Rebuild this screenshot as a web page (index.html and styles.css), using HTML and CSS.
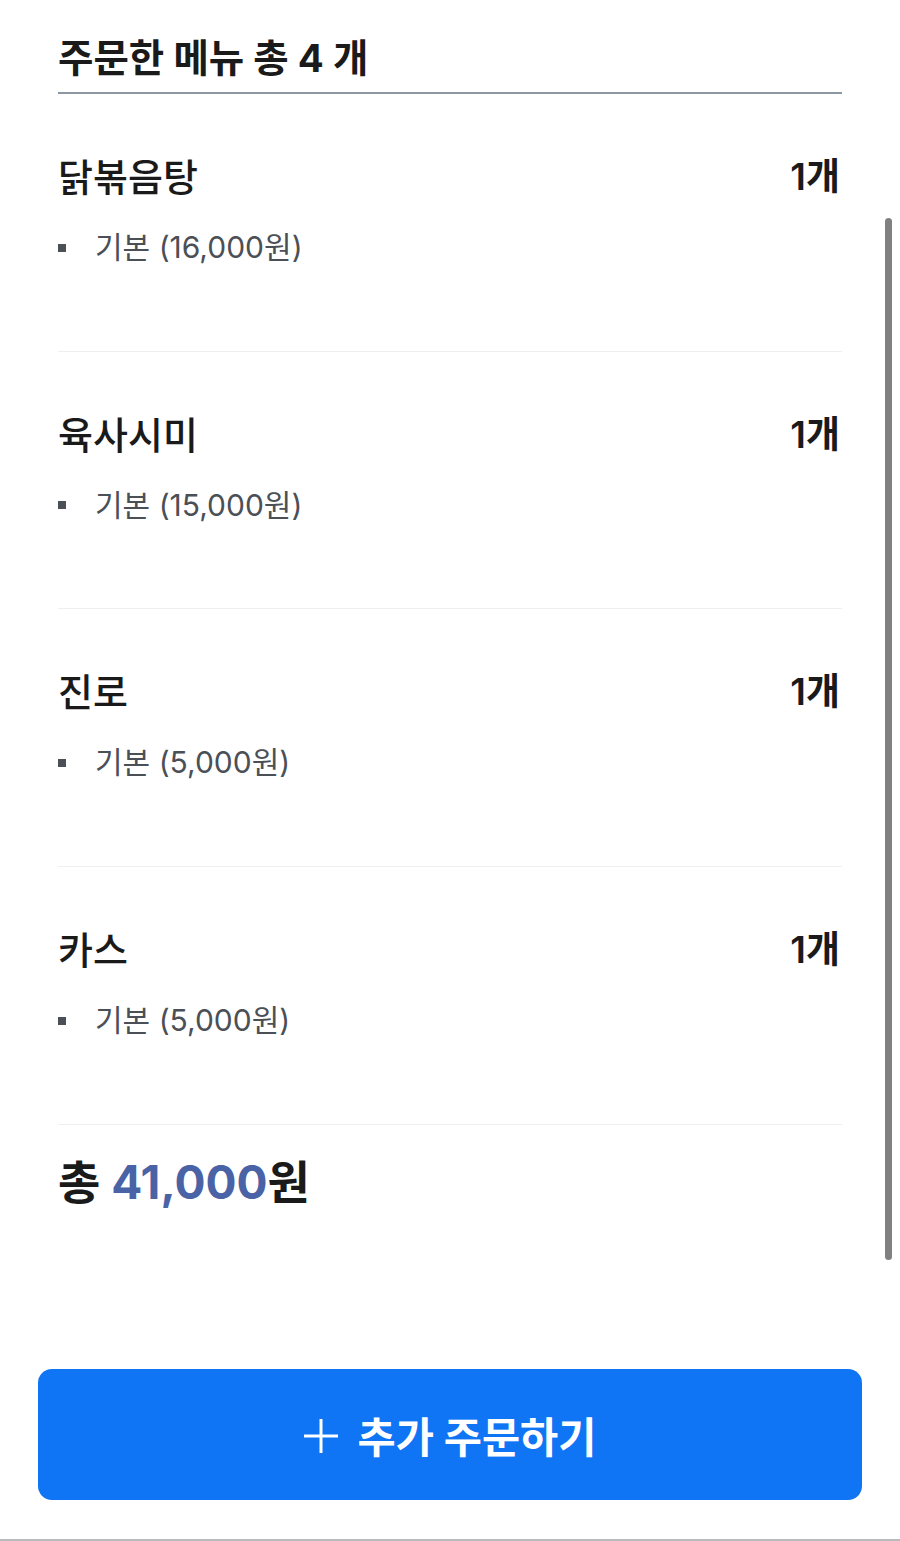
FILE: index.html
```html
<!DOCTYPE html>
<html lang="ko">
<head>
<meta charset="utf-8">
<link rel="stylesheet" href="styles.css">
</head>
<body>
<div class="page">
  <main class="content">
    <h1 class="title">주문한 메뉴 총 4 개</h1>
    <ul class="items">
      <li class="item">
        <div class="row"><span class="name">닭볶음탕</span><span class="qty">1개</span></div>
        <div class="opt"><span class="bullet"></span>기본 (16,000원)</div>
      </li>
      <li class="item">
        <div class="row"><span class="name">육사시미</span><span class="qty">1개</span></div>
        <div class="opt"><span class="bullet"></span>기본 (15,000원)</div>
      </li>
      <li class="item">
        <div class="row"><span class="name">진로</span><span class="qty">1개</span></div>
        <div class="opt"><span class="bullet"></span>기본 (5,000원)</div>
      </li>
      <li class="item">
        <div class="row"><span class="name">카스</span><span class="qty">1개</span></div>
        <div class="opt"><span class="bullet"></span>기본 (5,000원)</div>
      </li>
    </ul>
    <div class="total">총 <span class="amount">41,000</span>원</div>
  </main>
  <footer class="footer">
    <button class="add-btn"><svg class="plus" width="34" height="36" viewBox="0 0 34 36"><path d="M17 1V35M0 18H34" stroke="#fff" stroke-width="3" fill="none"/></svg>추가 주문하기</button>
  </footer>
  <div class="scrollbar"></div>
</div>
</body>
</html>
```
FILE: styles.css
```css
* { box-sizing: border-box; }
html, body { margin: 0; padding: 0; background: #fff; }
body {
  font-family: "Inter", "Noto Sans CJK KR", "Noto Sans", sans-serif;
  color: #1a1a1a;
}
.page {
  position: relative;
  height: 1541px;
  display: flex;
  flex-direction: column;
  overflow: hidden;
}
.content {
  flex: 1;
  padding: 0 58px;
}
.title {
  margin: 33px 0 0;
  font-size: 38.5px;
  font-weight: 700;
  line-height: 50px;
  padding-bottom: 9px;
  border-bottom: 2px solid #8d97a4;
}
.items { list-style: none; margin: 0; padding: 0; }
.item {
  padding: 58px 0 82.7px;
  border-bottom: 1px solid #eeeff1;
}
.row {
  display: flex;
  justify-content: space-between;
  align-items: center;
  line-height: 50px;
}
.name { font-size: 38px; font-weight: 500; }
.qty { font-size: 37px; font-weight: 600; padding-right: 2px; }
.opt {
  margin-top: 25px;
  display: flex;
  align-items: center;
  font-size: 30px;
  line-height: 41px;
  color: #4b4f56;
}
.bullet {
  width: 8px;
  height: 8px;
  background: #4b4f56;
  margin-right: 29px;
}
.total {
  margin-top: 27px;
  font-size: 46px;
  font-weight: 700;
  line-height: 60px;
}
.amount { color: #4a63a6; }
.footer {
  padding: 0 38px 39px;
  border-bottom: 2px solid #b8babd;
}
.add-btn {
  width: 100%;
  height: 131px;
  border: none;
  border-radius: 14px;
  background: #0f75f5;
  color: #fff;
  font-family: inherit;
  font-size: 41.5px;
  font-weight: 700;
  display: flex;
  align-items: center;
  justify-content: center;
}
.plus { margin-right: 20px; margin-top: 2px; flex: none; }
.scrollbar {
  position: absolute;
  left: 885px;
  top: 218px;
  width: 7px;
  height: 1042px;
  border-radius: 4px;
  background: #808080;
}
```
